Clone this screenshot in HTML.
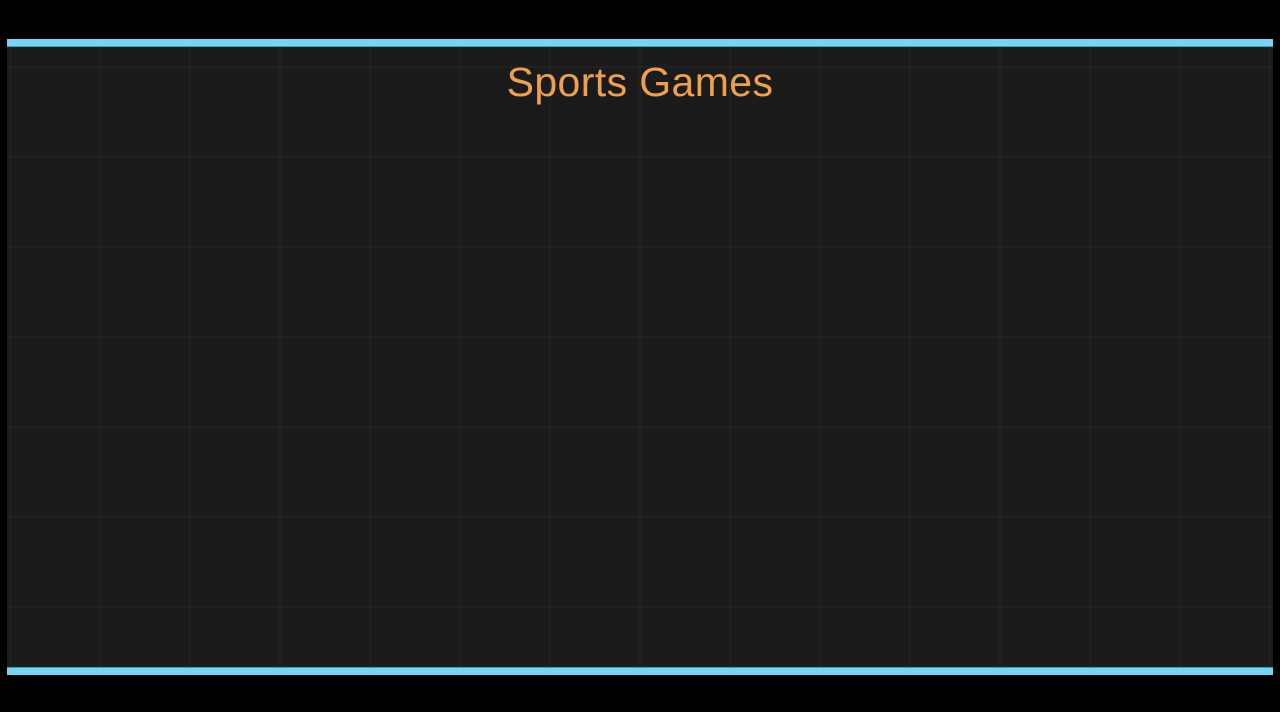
<!DOCTYPE html>
<html><head><style>
body{margin:0;width:1280px;height:712px;background:#000;overflow:hidden;position:relative;font-family:"Liberation Sans",sans-serif}
.p{position:absolute;left:7px;top:39px;width:1266px;height:636px;background:#1b1b1b;
background-image:linear-gradient(90deg,rgba(255,255,255,0.028) 2px,transparent 2px),linear-gradient(rgba(255,255,255,0.028) 2px,transparent 2px);
background-size:90px 90px;background-position:2px 27px,0 27px}
.t{position:absolute;left:7px;top:39px;width:1266px;height:7px;background:#74d6f2;border-bottom:1px solid #3aa0b8}
.b{position:absolute;left:7px;top:667px;width:1266px;height:7px;background:#74d6f2;border-top:1px solid #3aa0b8}
h1{position:absolute;left:0;width:1280px;top:59px;margin:0;text-align:center;font-weight:normal;font-size:41px;color:#f0a04c;letter-spacing:0.4px}
</style></head><body>
<div class="p"></div><div class="t"></div><div class="b"></div>
<h1>Sports Games</h1>
</body></html>
